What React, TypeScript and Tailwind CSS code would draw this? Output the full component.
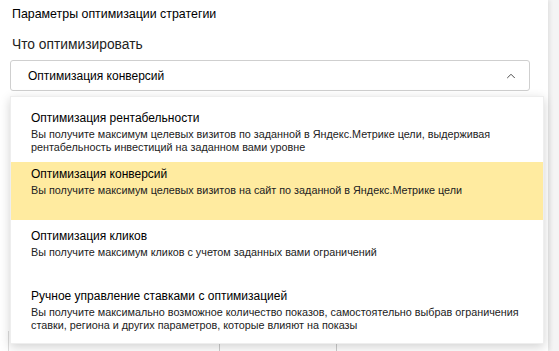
import { ChevronUp } from "lucide-react";

const options = [
  {
    title: "Оптимизация рентабельности",
    desc: "Вы получите максимум целевых визитов по заданной в Яндекс.Метрике цели, выдерживая рентабельность инвестиций на заданном вами уровне",
    pad: "pt-[13px] pb-[8px]",
  },
  {
    title: "Оптимизация конверсий",
    desc: "Вы получите максимум целевых визитов на сайт по заданной в Яндекс.Метрике цели",
    pad: "bg-[#ffeba0] pt-[4px] pb-[23px]",
  },
  {
    title: "Оптимизация кликов",
    desc: "Вы получите максимум кликов с учетом заданных вами ограничений",
    pad: "pt-[8px] pb-[29px]",
  },
  {
    title: "Ручное управление ставками с оптимизацией",
    desc: "Вы получите максимально возможное количество показов, самостоятельно выбрав ограничения ставки, региона и других параметров, которые влияют на показы",
    pad: "pb-[11px]",
  },
];

export default function App() {
  return (
    <div className="flex h-[351px] w-[559px] overflow-hidden bg-[#f4f4f4] font-['Liberation_Sans',Arial,sans-serif] text-black">
      <div className="relative flex h-full w-[548px] flex-col bg-white shadow-[2px_0_4px_rgba(0,0,0,0.08)]">
        <div className="px-[12px] pt-[6px] text-[12.4px] leading-[16px]">Параметры оптимизации стратегии</div>
        <div className="mt-[14px] px-[12px] text-[13.8px] leading-[18px] text-[#222]">Что оптимизировать</div>
        <div className="mx-[10px] mt-[6px] flex h-[31px] w-[520px] items-center justify-between rounded-[3px] border border-[#cfcfcf] pl-[17px] pr-[11px] text-[12px]">
          <span>Оптимизация конверсий</span>
          <ChevronUp className="h-[14px] w-[14px] text-[#333]" strokeWidth={1.5} />
        </div>

        {/* table rows hidden under the popup */}
        <div className="mt-auto flex h-[20px] pl-[8px]">
          <div className="w-[211px] border-l border-[#ddd]" />
          <div className="w-[117px] border-l border-[#ccc]" />
          <div className="flex-1 border-l border-[#ccc]" />
        </div>

        <div className="absolute left-[10px] top-[96px] flex h-[248px] w-[534px] flex-col border border-[#eee] bg-white shadow-[0_3px_10px_rgba(0,0,0,0.18)]">
          {options.map((o) => (
            <div key={o.title} className={`pl-[20px] pr-[8px] ${o.pad}`}>
              <div className="text-[12px] leading-[16px]">{o.title}</div>
              <div className="mt-[2px] text-[10.8px] leading-[13px] text-[#222]">{o.desc}</div>
            </div>
          ))}
        </div>
      </div>
    </div>
  );
}
